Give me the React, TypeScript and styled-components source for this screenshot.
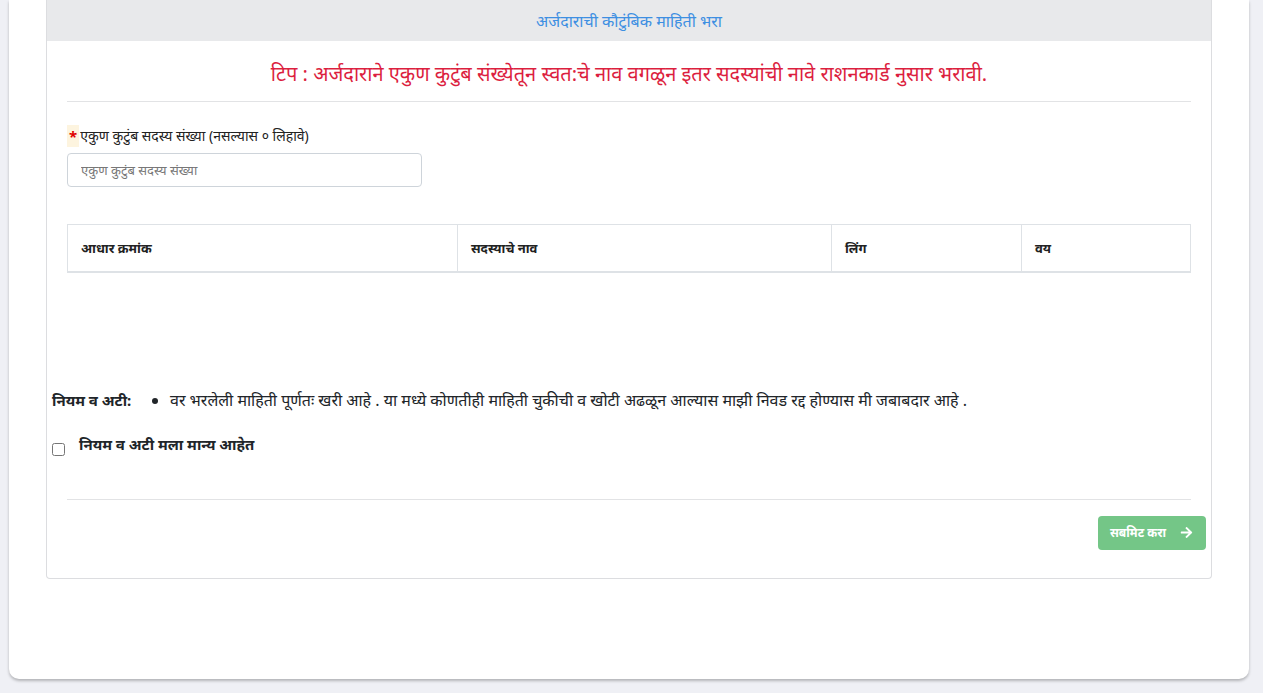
import React, { useState } from 'react';
import styled, { createGlobalStyle } from 'styled-components';

const GlobalStyle = createGlobalStyle`
  html, body {
    margin: 0;
    padding: 0;
    background: #eff0f5;
    font-family: "Noto Sans", "Liberation Sans", sans-serif;
    color: #212529;
  }
  * { box-sizing: border-box; }
`;

const App = () => {
    const [agree, SetAgree] = useState(false);
    return (
        <>
        <GlobalStyle />
        <Page>
            <Outer>
                <Card>
                    <CardHeader>अर्जदाराची कौटुंबिक माहिती भरा</CardHeader>
                    <CardBody>
                        <Tip>टिप : अर्जदाराने एकुण कुटुंब संख्येतून स्वत:चे नाव वगळून इतर सदस्यांची नावे राशनकार्ड नुसार भरावी.</Tip>
                        <Rule />
                        <Field>
                            <Label><Star>*</Star>एकुण कुटुंब सदस्य संख्या (नसल्यास ० लिहावे)</Label>
                            <Input type="text" placeholder="एकुण कुटुंब सदस्य संख्या" />
                        </Field>
                        <Table>
                            <thead>
                                <tr>
                                    <Th style={{ width: 390 }}>आधार क्रमांक</Th>
                                    <Th style={{ width: 374 }}>सदस्याचे नाव</Th>
                                    <Th style={{ width: 190 }}>लिंग</Th>
                                    <Th>वय</Th>
                                </tr>
                            </thead>
                        </Table>
                    </CardBody>
                    <Terms>
                        <TermsTitle>नियम व अटी:</TermsTitle>
                        <TermsList>
                            <li>वर भरलेली माहिती पूर्णतः खरी आहे . या मध्ये कोणतीही माहिती चुकीची व खोटी अढळून आल्यास माझी निवड रद्द होण्यास मी जबाबदार आहे .</li>
                        </TermsList>
                    </Terms>
                    <Agree>
                        <input type="checkbox" checked={agree} onChange={() => SetAgree(!agree)} />
                        <span>नियम व अटी मला मान्य आहेत</span>
                    </Agree>
                    <Footer>
                        <Rule />
                        <Actions>
                            <Submit>
                                सबमिट करा
                                <svg width="13" height="13" viewBox="0 0 448 512" fill="#fff">
                                    <path d="M190.5 66.9l22.2-22.2c9.4-9.4 24.6-9.4 33.9 0L441 239c9.4 9.4 9.4 24.6 0 33.9L246.6 467.3c-9.4 9.4-24.6 9.4-33.9 0l-22.2-22.2c-9.5-9.5-9.3-25 .4-34.3L311.4 296H24c-13.3 0-24-10.7-24-24v-32c0-13.3 10.7-24 24-24h287.4L190.9 101.2c-9.8-9.3-10-24.8-.4-34.3z" />
                                </svg>
                            </Submit>
                        </Actions>
                    </Footer>
                </Card>
            </Outer>
        </Page>
        </>
    );
}

const Page = styled.div`
    padding: 0 14px 14px 9px;
`;

const Outer = styled.div`
    background: #fff;
    border-radius: 0 0 10px 10px;
    box-shadow: 0 2px 3px rgba(0,0,0,0.25);
    padding: 0 37px 100px;
`;

const Card = styled.div`
    border: 1px solid #dcdde0;
    border-top: none;
    border-radius: 0 0 4px 4px;
    background: #fff;
`;

const CardHeader = styled.div`
    background: #e8e9eb;
    height: 41px;
    display: flex;
    align-items: center;
    justify-content: center;
    color: #3d8fe2;
    font-size: 16px;
`;

const CardBody = styled.div`
    padding: 20px 20px 0;
`;

const Tip = styled.div`
    color: #dc1f3f;
    font-size: 20px;
    text-align: center;
    line-height: 26px;
    padding: 0 0 14px;
`;

const Rule = styled.div`
    height: 1px;
    background: #e2e3e5;
`;

const Field = styled.div`
    padding-top: 23px;
    display: flex;
    flex-direction: column;
    align-items: flex-start;
    gap: 6px;
`;

const Label = styled.label`
    font-size: 14px;
    line-height: 22px;
    color: #222;
    display: flex;
    align-items: center;
`;

const Star = styled.span`
    color: #e00000;
    font-weight: bold;
    font-size: 15px;
    background: #fdf4df;
    padding: 0 2px;
    margin-right: 1px;
`;

const Input = styled.input`
    width: 355px;
    height: 34px;
    border: 1px solid #ced4da;
    border-radius: 4px;
    padding: 0 13px;
    font-family: inherit;
    font-size: 13px;
    &::placeholder { color: #777; }
`;

const Table = styled.table`
    margin-top: 37px;
    width: 100%;
    border-collapse: collapse;
    border: 1px solid #dee2e6;
`;

const Th = styled.th`
    text-align: left;
    font-size: 13px;
    font-weight: bold;
    height: 47px;
    padding: 0 13px;
    border: 1px solid #dee2e6;
    border-bottom: 2px solid #dee2e6;
    color: #222;
`;

const Terms = styled.div`
    display: flex;
    align-items: baseline;
    padding: 115px 0 0 5px;
`;

const TermsTitle = styled.div`
    font-size: 15px;
    font-weight: bold;
    width: 101px;
`;

const TermsList = styled.ul`
    margin: 0;
    padding-left: 17px;
    font-size: 16px;
    line-height: 24px;
`;

const Agree = styled.label`
    display: flex;
    align-items: flex-start;
    gap: 14px;
    padding: 21px 0 0 5px;
    font-size: 15px;
    font-weight: bold;
    line-height: 22px;
    & > input { margin: 10px 0 0; width: 13px; height: 13px; }
`;

const Footer = styled.div`
    padding: 43px 20px 28px;
`;

const Actions = styled.div`
    display: flex;
    justify-content: flex-end;
    margin-right: -15px;
    padding-top: 16px;
`;

const Submit = styled.button`
    display: flex;
    align-items: center;
    gap: 14px;
    height: 34px;
    padding: 0 13px 0 12px;
    border: none;
    border-radius: 4px;
    background: #74c687;
    color: #fff;
    font-family: inherit;
    font-size: 12px;
    font-weight: bold;
`;

export default App;
